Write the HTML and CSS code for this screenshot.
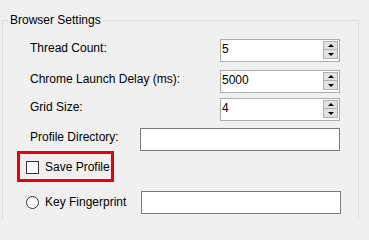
FILE: index.html
```html
<!DOCTYPE html>
<html>
<head>
<meta charset="utf-8">
<link rel="stylesheet" href="styles.css">
</head>
<body>
<fieldset class="group">
  <legend class="group-title">Browser Settings</legend>

  <div class="row row-1">
    <span class="lbl lbl-spin">Thread Count:</span>
    <div class="spin">
      <span class="spin-val">5</span>
      <div class="spin-btns"><span class="sb sb-up"></span><span class="sb sb-down"></span></div>
    </div>
  </div>

  <div class="row row-2">
    <span class="lbl lbl-spin">Chrome Launch Delay (ms):</span>
    <div class="spin">
      <span class="spin-val">5000</span>
      <div class="spin-btns"><span class="sb sb-up"></span><span class="sb sb-down"></span></div>
    </div>
  </div>

  <div class="row row-3">
    <span class="lbl lbl-spin">Grid Size:</span>
    <div class="spin">
      <span class="spin-val">4</span>
      <div class="spin-btns"><span class="sb sb-up"></span><span class="sb sb-down"></span></div>
    </div>
  </div>

  <div class="row row-4">
    <span class="lbl lbl-text">Profile Directory:</span>
    <div class="textbox"></div>
  </div>

  <div class="highlight">
    <span class="checkbox"></span>
    <span class="check-lbl">Save Profile</span>
  </div>

  <div class="row row-6">
    <span class="radio"></span>
    <span class="lbl lbl-radio">Key Fingerprint</span>
    <div class="textbox"></div>
  </div>
</fieldset>
</body>
</html>
```

FILE: styles.css
```css
html, body {
  margin: 0;
  padding: 0;
  background: #f0f0f0;
  overflow: hidden;
}

body {
  font-family: "Liberation Sans", Arial, sans-serif;
  font-size: 12px;
  line-height: 16px;
  color: #000;
}

.group {
  box-sizing: border-box;
  width: 357px;
  height: 207px;
  margin: 12px 0 0 2px;
  padding: 0;
  border: 1px solid #dcdcdc;
  border-bottom: 0;
  min-inline-size: 0;
}

.group-title {
  margin-left: 5px;
  padding: 0 2px;
  line-height: 16px;
}

.row {
  display: flex;
  align-items: flex-start;
  height: 23px;
  padding-left: 27px;
}

.row-1 { margin-top: 11px; }
.row-2 { margin-top: 8px; }
.row-3 { margin-top: 5px; }
.row-4 { margin-top: 7px; }

.lbl {
  padding-top: 1px;
  white-space: nowrap;
}

.lbl-spin { width: 190px; }
.lbl-text { width: 110px; }

.spin {
  box-sizing: border-box;
  width: 120px;
  height: 23px;
  border: 1px solid #acacac;
  background: #fff;
  display: flex;
  justify-content: space-between;
}

.spin-val {
  padding-left: 1px;
  padding-top: 1px;
}

.spin-btns {
  display: flex;
  flex-direction: column;
  margin: 1px 1px 0 0;
  width: 15px;
}

.sb {
  box-sizing: border-box;
  display: flex;
  align-items: center;
  justify-content: center;
  width: 15px;
  height: 9px;
  background: #e1e1e1;
  border: 1px solid #b2b2b2;
}

.sb-down { margin-top: -1px; height: 10px; }

.sb::before {
  content: "";
  display: block;
  width: 0;
  height: 0;
  border-left: 3px solid transparent;
  border-right: 3px solid transparent;
}

.sb-up::before { border-bottom: 3px solid #000; }
.sb-down::before { border-top: 3px solid #000; }

.textbox {
  box-sizing: border-box;
  width: 200px;
  height: 23px;
  border: 1px solid #7a7a7a;
  background: #fff;
}

.highlight {
  box-sizing: border-box;
  display: flex;
  align-items: center;
  width: 97px;
  height: 31px;
  margin-left: 14px;
  padding-left: 6px;
  border: 3px solid #e8000b;
}

.checkbox {
  box-sizing: border-box;
  width: 13px;
  height: 13px;
  border: 1px solid #333;
  background: #fff;
  margin-right: 6px;
  margin-top: 1px;
}

.check-lbl { white-space: nowrap; }

.row-6 {
  margin-top: 9px;
  padding-left: 23px;
  align-items: center;
}

.row-6 .lbl { padding-top: 0; margin-top: -2px; }

.radio {
  box-sizing: border-box;
  width: 13px;
  height: 13px;
  border: 1px solid #333;
  border-radius: 50%;
  background: #fff;
  margin-right: 6px;
  margin-top: -1px;
}

.lbl-radio { width: 96px; }
```
